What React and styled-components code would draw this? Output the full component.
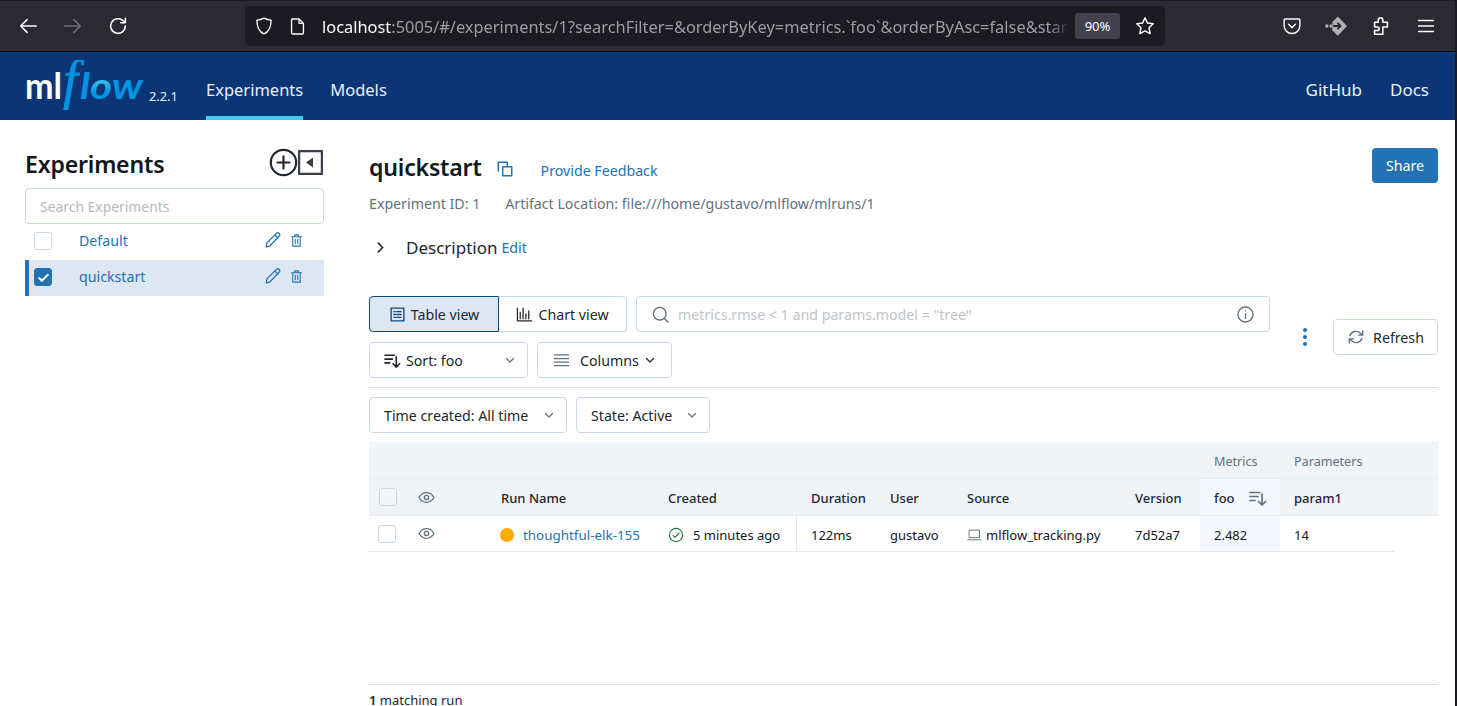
import React from "react";
import styled, { createGlobalStyle } from "styled-components";

const font = `"Noto Sans", "Open Sans", sans-serif`;

const GlobalStyle = createGlobalStyle`
  html, body {
    margin: 0;
    padding: 0;
    background: #fff;
    overflow: hidden;
    font-family: ${font};
  }
  * { box-sizing: border-box; }
`;

const Svg = styled.svg`
  display: block;
  flex: none;
`;

const Icon = ({ size = 16, children, sw = 1.6, color = "currentColor", box = "0 0 24 24" }) => (
  <Svg width={size} height={size} viewBox={box} fill="none" stroke={color} strokeWidth={sw} strokeLinecap="round" strokeLinejoin="round">
    {children}
  </Svg>
);

const Chevron = ({ color = "#5f7281", size = 12 }) => (
  <Icon size={size} sw={2.4} color={color}>
    <path d="M5 9l7 7 7-7" />
  </Icon>
);

const SortIcon = ({ color = "#20272e", size = 17 }) => (
  <Icon size={size} sw={1.7} color={color} box="0 0 18 18">
    <path d="M1 3.5h10M1 7.5h8M1 11.5h5M13 5v11M9.5 12.5L13 16l3.5-3.5" />
  </Icon>
);

const Eye = () => (
  <Icon size={17} sw={1.9} color="#5f7281">
    <path d="M1.5 12C4 7.5 7.8 5.2 12 5.2s8 2.3 10.5 6.800C20 16.500 16.200 18.800 12 18.800S4 16.500 1.500 12z" />
    <circle cx="12" cy="12" r="3" />
  </Icon>
);

const Page = styled.div`
  width: 1457px;
  height: 706px;
  display: flex;
  flex-direction: column;
  overflow: hidden;
  border-right: 2px solid #1c1b22;
`;

/* browser chrome */
const Chrome = styled.div`
  height: 52px;
  flex: none;
  background: #2b2a33;
  border-top: 1px solid #1c1b22;
  border-bottom: 1px solid #0c0c0d;
  display: flex;
  align-items: center;
  padding-left: 17px;
  color: #fbfbfe;
`;

const ChromeBtns = styled.div`
  display: flex;
  align-items: center;
  gap: 23px;
  width: 228px;
  flex: none;
`;

const UrlBar = styled.div`
  width: 920px;
  height: 40px;
  flex: none;
  background: #1c1b22;
  border-radius: 5px;
  display: flex;
  align-items: center;
  padding-left: 9px;
  font-size: 16.4px;
  color: #fbfbfe;
`;

const Spacer = styled.div`
  width: ${(p) => p.$w}px;
  flex: none;
`;

const UrlText = styled.div`
  margin-left: 15px;
  width: 749px;
  flex: none;
  overflow: hidden;
  white-space: nowrap;
  mask-image: linear-gradient(to right, #000 97%, transparent);
  span { color: #9d9da3; }
`;

const Zoom = styled.div`
  width: 45px;
  height: 26px;
  margin-left: 4px;
  flex: none;
  background: #42414d;
  border-radius: 3px;
  font-size: 13px;
  display: flex;
  align-items: center;
  justify-content: center;
`;

const ChromeRight = styled.div`
  margin-left: auto;
  display: flex;
  align-items: center;
  gap: 23px;
  padding-right: 18px;
`;

/* app header */
const Header = styled.div`
  height: 68px;
  flex: none;
  background: #0b3574;
  display: flex;
  align-items: stretch;
  padding: 0 26px 0 24px;
  color: #e7f1fb;
  font-size: 16.5px;
`;

const Logo = styled.div`
  display: flex;
  align-items: flex-start;
  width: 182px;
  flex: none;
  padding-top: 8px;
`;

const Version = styled.span`
  font-size: 12.8px;
  line-height: 14px;
  margin-top: 29px;
  margin-left: 3px;
`;

const NavItem = styled.div`
  display: flex;
  align-items: center;
  margin-right: 27px;
  padding-top: 10px;
  border-bottom: 4px solid ${(p) => (p.$active ? "#43c9ed" : "transparent")};
`;

const NavRight = styled.div`
  margin-left: auto;
  display: flex;
  gap: 28px;
  align-items: center;
  padding-top: 6px;
  font-size: 17px;
`;

/* body */
const Body = styled.div`
  flex: 1;
  display: flex;
  min-height: 0;
  color: #11171c;
  font-size: 14.2px;
`;

const Sidebar = styled.div`
  width: 369px;
  flex: none;
  padding: 26px 45px 0 25px;
`;

const SideHead = styled.div`
  display: flex;
  align-items: center;
  justify-content: space-between;
  height: 42px;
  padding-bottom: 9px;
`;

const SideTitle = styled.h2`
  margin: 3px 0 0;
  font-size: 23.1px;
  font-weight: 600;
  color: #11171c;
  letter-spacing: -0.2px;
`;

const SideIcons = styled.div`
  display: flex;
  align-items: center;
  padding-right: 1px;
`;

const SearchBox = styled.div`
  height: 36px;
  border: 1px solid #c9d6e4;
  border-radius: 4px;
  display: flex;
  align-items: center;
  padding: 1px 0 0 14px;
  color: #b5b9bd;
  font-size: 13.9px;
`;

const ExpRow = styled.div`
  height: 36px;
  display: flex;
  align-items: center;
  background: ${(p) => (p.$active ? "#dce7f3" : "transparent")};
  border-left: 4px solid ${(p) => (p.$active ? "#2272b4" : "transparent")};
  padding: 0 19px 2px 5px;
  color: #2272b4;
`;

const CheckBox = styled.div`
  width: 18px;
  height: 18px;
  flex: none;
  border-radius: 3px;
  border: 1px solid ${(p) => (p.$on ? "#2272b4" : "#c9d6e4")};
  background: ${(p) => (p.$on ? "#2272b4" : p.$muted ? "#f2f5f8" : "#fff")};
  display: flex;
  align-items: center;
  justify-content: center;
`;

const ExpName = styled.div`
  margin: -2px 0 0 27px;
  flex: 1;
`;

const RowIcons = styled.div`
  display: flex;
  align-items: center;
  gap: 7px;
  margin-top: -2px;
  padding-right: 1px;
`;

const Main = styled.div`
  flex: 1;
  min-width: 0;
  padding: 29px 17px 0 0;
  display: flex;
  flex-direction: column;
`;

const TitleRow = styled.div`
  display: flex;
  align-items: center;
  height: 36px;
`;

const Title = styled.h1`
  margin: 0;
  font-size: 23.1px;
  font-weight: 600;
  color: #11171c;
  letter-spacing: -0.2px;
`;

const CopyWrap = styled.div`
  margin: 4px 27px 0 14px;
`;

const Feedback = styled.span`
  color: #2272b4;
  margin-top: 6px;
`;

const ShareBtn = styled.div`
  margin-left: auto;
  width: 66px;
  height: 35px;
  margin-top: -3px;
  background: #2272b4;
  color: #fff;
  border-radius: 4px;
  display: flex;
  align-items: center;
  justify-content: center;
`;

const MetaRow = styled.div`
  display: flex;
  gap: 25px;
  height: 20px;
  margin-top: 8px;
  align-items: center;
  color: #5f7281;
`;

const DescRow = styled.div`
  display: flex;
  align-items: center;
  height: 32px;
  margin-top: 18px;
  padding-left: 5px;
`;

const DescTitle = styled.span`
  font-size: 17px;
  margin-left: 19px;
  margin-right: 4px;
  color: #20272e;
`;

const EditLink = styled.span`
  color: #2272b4;
  margin-top: 1px;
`;

const Controls = styled.div`
  display: flex;
  margin-top: 33px;
  align-items: center;
`;

const ControlsLeft = styled.div`
  width: 901px;
  display: flex;
  flex-direction: column;
  gap: 10px;
`;

const ControlLine = styled.div`
  display: flex;
  align-items: center;
  gap: 9px;
`;

const Segment = styled.div`
  display: flex;
  height: 36px;
`;

const SegBtn = styled.div`
  width: ${(p) => p.$w}px;
  display: flex;
  align-items: center;
  justify-content: center;
  gap: 5px;
  background: ${(p) => (p.$active ? "#dce7f3" : "#fff")};
  border: 1px solid ${(p) => (p.$active ? "#0e4a7d" : "#c9d6e4")};
  border-left-width: ${(p) => (p.$active ? 1 : 0)}px;
  border-radius: ${(p) => (p.$active ? "4px 0 0 4px" : "0 4px 4px 0")};
  color: #20272e;
`;

const QueryBox = styled.div`
  flex: 1;
  height: 36px;
  border: 1px solid #c9d6e4;
  border-radius: 4px;
  display: flex;
  align-items: center;
  padding: 0 14px;
  gap: 8px;
`;

const Placeholder = styled.span`
  flex: 1;
  color: #bfc3c7;
`;

const Dropdown = styled.div`
  width: ${(p) => p.$w}px;
  height: 36px;
  border: 1px solid #c9d6e4;
  border-radius: 4px;
  display: flex;
  align-items: center;
  padding: 0 ${(p) => p.$pr ?? 11}px 0 14px;
  color: #20272e;
`;

const DropLabel = styled.span`
  margin-left: ${(p) => p.$ml ?? 0}px;
  flex: 1;
  white-space: nowrap;
`;

const ControlsRight = styled.div`
  display: flex;
  flex: 1;
  align-items: center;
  justify-content: space-between;
  padding-left: 33px;
`;

const Kebab = styled.div`
  display: flex;
  flex-direction: column;
  gap: 3px;
  span {
    width: 4px;
    height: 4px;
    border-radius: 50%;
    background: #2272b4;
  }
`;

const RefreshBtn = styled.div`
  width: 105px;
  height: 36px;
  border: 1px solid #c9d6e4;
  border-radius: 4px;
  display: flex;
  align-items: center;
  justify-content: center;
  gap: 8px;
  color: #20272e;
`;

const Divider = styled.div`
  height: 1px;
  background: #d1dce8;
  margin: 9px 0;
`;

const Table = styled.div`
  margin-top: 9px;
  display: grid;
  grid-template-columns: 48px 70px 167px 143px 79px 77px 168px 79px 80px 158px;
`;

const GroupRow = styled.div`
  grid-column: 1 / -1;
  display: grid;
  grid-template-columns: subgrid;
  height: 37px;
  background: #f1f4f7;
  border-bottom: 1px solid #e6ecf2;
`;

const GroupCell = styled.div`
  grid-column: ${(p) => p.$col};
  display: flex;
  align-items: center;
  padding: 2px 0 0 14px;
  font-size: 12.6px;
  color: #5f7281;
`;

const HeadRow = styled(GroupRow)``;

const DataRow = styled.div`
  grid-column: 1 / -1;
  display: grid;
  grid-template-columns: subgrid;
  height: 36px;
  border-bottom: 1px solid #e3e9ef;
  margin-right: 44px;
`;

const Cell = styled.div`
  display: flex;
  align-items: center;
  padding-left: ${(p) => p.$pl ?? 14}px;
  padding-top: ${(p) => (p.$icon ? 0 : 2)}px;
  gap: ${(p) => p.$gap ?? 0}px;
  font-size: 13px;
  font-weight: ${(p) => (p.$head ? 500 : 400)};
  color: ${(p) => (p.$head ? "#20272e" : "#11171c")};
  background: ${(p) => (p.$sorted ? "#f4f8fd" : "transparent")};
  border-right: ${(p) => (p.$rule ? "1px solid #e3e9ef" : "0")};
  white-space: nowrap;
`;

const Dot = styled.span`
  width: 14px;
  height: 14px;
  border-radius: 50%;
  background: #ffab00;
  flex: none;
`;

const RunLink = styled.span`
  color: #2272b4;
  font-size: 13.4px;
`;

const Footer = styled.div`
  margin-top: auto;
  border-top: 1px solid #d1dce8;
  height: 22px;
  padding-top: 6px;
  font-size: 13px;
  color: #20272e;
  white-space: nowrap;
  b { font-weight: 600; }
`;

const Pencil = () => (
  <Icon size={19} sw={1.7} color="#2272b4">
    <path d="M4 20l1-5L17 3c1-1 2.500-1 3.500 0s1 2.500 0 3.500L8.500 19 4 20zM15 5l4 4" />
  </Icon>
);

const Trash = () => (
  <Icon size={15} sw={1.7} color="#2272b4">
    <path d="M4 6h16M9 6V3h6v3M6 6v15h12V6M10 10v7M14 10v7" />
  </Icon>
);

const MlflowLogo = () => (
  <Svg width="122" height="50" viewBox="0 0 122 50">
    <defs>
      <linearGradient id="flowO" x1="0" y1="0" x2="0" y2="1">
        <stop offset="0.35" stopColor="#43c9ed" />
        <stop offset="0.7" stopColor="#0194e2" />
      </linearGradient>
    </defs>
    <text x="1" y="39" fontFamily="Lato, sans-serif" fontWeight="700" fontSize="36" fill="#fff" textLength="37" lengthAdjust="spacingAndGlyphs">ml</text>
    <text x="39" y="38" fontFamily="'Liberation Serif', serif" fontStyle="italic" fontSize="54" fill="#0194e2" stroke="#0194e2" strokeWidth="0.8">f</text>
    <text x="56" y="39" fontFamily="Lato, sans-serif" fontStyle="italic" fontWeight="700" fontSize="37" fill="#0194e2" textLength="63" lengthAdjust="spacingAndGlyphs">l<tspan fill="url(#flowO)">o</tspan>w</text>
  </Svg>
);

export default function App() {
  return (
    <Page>
      <GlobalStyle />
      <Chrome>
        <ChromeBtns>
          <Icon size={22} sw={1.7} color="#fbfbfe"><path d="M21 12H4M11 5l-7 7 7 7" /></Icon>
          <Icon size={22} sw={1.7} color="#6f6f75"><path d="M3 12h17M13 5l7 7-7 7" /></Icon>
          <Icon size={22} sw={1.7} color="#fbfbfe"><path d="M20 12a8 8 0 1 1-2.400-5.700L20 8.500M20 3.500v5h-5" /></Icon>
        </ChromeBtns>
        <UrlBar>
          <Icon size={20} sw={1.6} color="#fbfbfe"><path d="M12 2.500c3 1.500 5.500 2.200 8.500 2.500 0 8-1.500 13.500-8.500 16.500C5 18.500 3.500 13 3.500 5c3-.3 5.500-1 8.500-2.500z" /></Icon>
          <Spacer $w={14} />
          <Icon size={19} sw={1.7} color="#fbfbfe"><path d="M5 2.500h9l5.500 5.500v12a1.500 1.500 0 0 1-1.500 1.500H6A1.500 1.500 0 0 1 4.500 20V4A1.500 1.500 0 0 1 6 2.500zM14 2.500V8h5.500" /></Icon>
          <UrlText>localhost<span>:5005/#/experiments/1?searchFilter=&amp;orderByKey=metrics.`foo`&amp;orderByAsc=false&amp;star</span></UrlText>
          <Zoom>90%</Zoom>
          <Spacer $w={14} />
          <Icon size={22} sw={1.6} color="#fbfbfe"><path d="M12 3l2.700 5.800 6.300.8-4.600 4.400 1.200 6.300L12 17.200 6.400 20.300 7.600 14 3 9.600l6.300-.8z" /></Icon>
        </UrlBar>
        <ChromeRight>
          <Icon size={20} sw={1.7} color="#fbfbfe"><path d="M4 3.500h16a1.500 1.500 0 0 1 1.500 1.500v6.500a9.500 9.500 0 0 1-19 0V5A1.500 1.500 0 0 1 4 3.500zM8 10l4 4 4-4" /></Icon>
          <Svg width="22" height="22" viewBox="0 0 24 24">
            <path d="M14 1.500l10 10.500-10 10.500-6-6v-9z" fill="#b0b0b5" />
            <circle cx="2" cy="12" r="1.800" fill="#b0b0b5" />
            <circle cx="6.500" cy="12" r="1.800" fill="#b0b0b5" />
            <path d="M9 12h8M13.500 8.500L17 12l-3.500 3.500" fill="none" stroke="#2b2a33" strokeWidth="2" />
          </Svg>
          <Icon size={22} sw={1.7} color="#fbfbfe"><path d="M9 8V5.500a2.500 2.500 0 0 1 5 0V8h5v5h-5v8H5v-4h3a2 2 0 0 0 0-4H5V8z" /></Icon>
          <Icon size={22} sw={1.8} color="#fbfbfe"><path d="M4 6h16M4 12h16M4 18h16" /></Icon>
        </ChromeRight>
      </Chrome>

      <Header>
        <Logo>
          <MlflowLogo />
          <Version>2.2.1</Version>
        </Logo>
        <NavItem $active>Experiments</NavItem>
        <NavItem>Models</NavItem>
        <NavRight>
          <span>GitHub</span>
          <span>Docs</span>
        </NavRight>
      </Header>

      <Body>
        <Sidebar>
          <SideHead>
            <SideTitle>Experiments</SideTitle>
            <SideIcons>
              <Icon size={29} sw={1.8} color="#20272e"><circle cx="12" cy="12" r="10.500" /><path d="M12 7v10M7 12h10" /></Icon>
              <Svg width="25" height="25" viewBox="0 0 25 25">
                <rect x="1" y="1" width="23" height="23" rx="1" fill="none" stroke="#3a3f45" strokeWidth="2.400" />
                <path d="M15 7.500v10l-7-5z" fill="#3a3f45" />
              </Svg>
            </SideIcons>
          </SideHead>
          <SearchBox>Search Experiments</SearchBox>
          <ExpRow>
            <CheckBox />
            <ExpName>Default</ExpName>
            <RowIcons><Pencil /><Trash /></RowIcons>
          </ExpRow>
          <ExpRow $active>
            <CheckBox $on>
              <Icon size={13} sw={3.5} color="#fff"><path d="M4 13l5 5L20 7" /></Icon>
            </CheckBox>
            <ExpName>quickstart</ExpName>
            <RowIcons><Pencil /><Trash /></RowIcons>
          </ExpRow>
        </Sidebar>

        <Main>
          <TitleRow>
            <Title>quickstart</Title>
            <CopyWrap>
              <Icon size={18} sw={1.9} color="#2272b4">
                <path d="M3 15V3h12v5M9 9h12v12H9z" />
              </Icon>
            </CopyWrap>
            <Feedback>Provide Feedback</Feedback>
            <ShareBtn>Share</ShareBtn>
          </TitleRow>
          <MetaRow>
            <span>Experiment ID: 1</span>
            <span>Artifact Location: file:///home/gustavo/mlflow/mlruns/1</span>
          </MetaRow>
          <DescRow>
            <Icon size={13} sw={3} color="#20272e"><path d="M8 4l8 8-8 8" /></Icon>
            <DescTitle>Description</DescTitle>
            <EditLink>Edit</EditLink>
          </DescRow>

          <Controls>
            <ControlsLeft>
              <ControlLine>
                <Segment>
                  <SegBtn $w={130} $active>
                    <Icon size={17} sw={1.9} color="#0e4a7d"><path d="M3 3h18v18H3zM7 8h2M11 8h6M7 12h2M11 12h6M7 16h2M11 16h6" /></Icon>
                    Table view
                  </SegBtn>
                  <SegBtn $w={128}>
                    <Icon size={17} sw={1.8} color="#20272e"><path d="M2 3v18h20M6 9v9M10 3v15M14 11v7M18 7v11" /></Icon>
                    Chart view
                  </SegBtn>
                </Segment>
                <QueryBox>
                  <Icon size={19} sw={1.8} color="#5f7281"><circle cx="11" cy="11" r="8" /><path d="M17 17l4.500 4.500" /></Icon>
                  <Placeholder>metrics.rmse &lt; 1 and params.model = "tree"</Placeholder>
                  <Icon size={19} sw={1.7} color="#5f7281"><circle cx="12" cy="12" r="9.500" /><path d="M12 11v6M12 7.500v.2" /></Icon>
                </QueryBox>
              </ControlLine>
              <ControlLine>
                <Dropdown $w={159}>
                  <SortIcon />
                  <DropLabel $ml={5}>Sort: foo</DropLabel>
                  <Chevron />
                </Dropdown>
                <Dropdown $w={135} $pr={15}>
                  <Icon size={19} sw={1.6} color="#5f7281"><path d="M3 5h18M3 9.500h18M3 14h18M3 18.500h18" /></Icon>
                  <DropLabel $ml={9}>Columns</DropLabel>
                  <Chevron color="#20272e" />
                </Dropdown>
              </ControlLine>
            </ControlsLeft>
            <ControlsRight>
              <Kebab><span /><span /><span /></Kebab>
              <RefreshBtn>
                <Icon size={18} sw={1.8} color="#5f7281"><path d="M21 4v5.500h-5.500M3 20v-5.500h5.500M4 10a8.500 8.500 0 0 1 14-3l3 2.500M20 14a8.500 8.500 0 0 1-14 3l-3-2.500" /></Icon>
                Refresh
              </RefreshBtn>
            </ControlsRight>
          </Controls>

          <Divider />

          <ControlLine>
            <Dropdown $w={198}>
              <DropLabel>Time created: All time</DropLabel>
              <Chevron />
            </Dropdown>
            <Dropdown $w={134}>
              <DropLabel>State: Active</DropLabel>
              <Chevron />
            </Dropdown>
          </ControlLine>

          <Table>
            <GroupRow>
              <GroupCell $col="9">Metrics</GroupCell>
              <GroupCell $col="10">Parameters</GroupCell>
            </GroupRow>
            <HeadRow>
              <Cell $pl={10} $icon><CheckBox $muted /></Cell>
              <Cell $pl={1} $icon><Eye /></Cell>
              <Cell $head>Run Name</Cell>
              <Cell $head>Created</Cell>
              <Cell $head>Duration</Cell>
              <Cell $head>User</Cell>
              <Cell $head>Source</Cell>
              <Cell $head>Version</Cell>
              <Cell $head $sorted $gap={14}>foo <SortIcon color="#5f7281" size={18} /></Cell>
              <Cell $head>param1</Cell>
            </HeadRow>
            <DataRow>
              <Cell $pl={9} $icon><CheckBox /></Cell>
              <Cell $pl={1} $icon><Eye /></Cell>
              <Cell $pl={13} $gap={9}><Dot /><RunLink>thoughtful-elk-155</RunLink></Cell>
              <Cell $gap={9} $rule><Icon size={16} sw={1.7} color="#277c43"><circle cx="12" cy="12" r="10" /><path d="M7.500 12.500l3 3 6-6.500" /></Icon>5 minutes ago</Cell>
              <Cell>122ms</Cell>
              <Cell>gustavo</Cell>
              <Cell $gap={4}><Icon size={15} sw={1.5} color="#5f7281"><path d="M4 5h16v12H4zM1.500 20.500h21" /></Icon>mlflow_tracking.py</Cell>
              <Cell>7d52a7</Cell>
              <Cell $sorted>2.482</Cell>
              <Cell>14</Cell>
            </DataRow>
          </Table>

          <Footer><b>1</b> matching run</Footer>
        </Main>
      </Body>
    </Page>
  );
}
